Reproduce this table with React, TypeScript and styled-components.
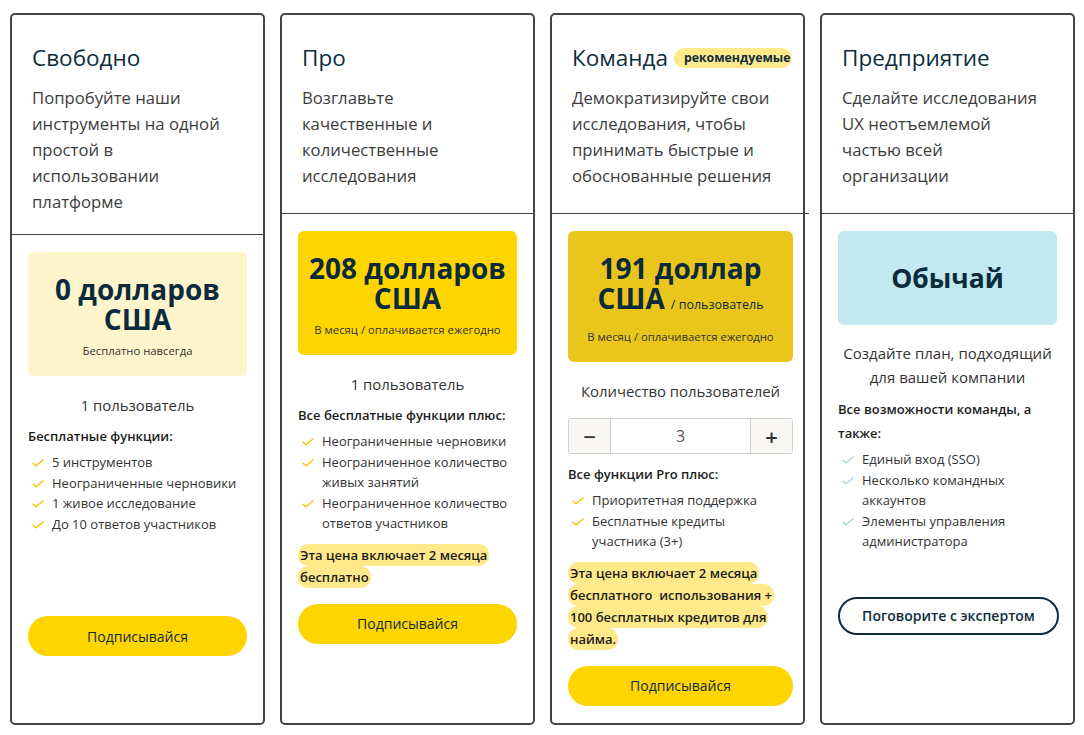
import React, { useState } from 'react';
import styled, { createGlobalStyle } from 'styled-components';

const GlobalStyle = createGlobalStyle`
  * { box-sizing: border-box; }
  body {
    margin: 0;
    background: #fff;
    font-family: 'Open Sans', 'Noto Sans', sans-serif;
  }
`;

const Page = styled.div`
  display: flex;
  gap: 15px;
  height: 100vh;
  padding: 13px 8px 10px 10px;
`;

const Card = styled.div`
  width: 255px;
  flex-shrink: 0;
  border: 2px solid #444;
  border-radius: 5px;
  display: flex;
  flex-direction: column;
`;

const Inner = styled.div<{ $wide?: boolean }>`
  margin-right: ${(p) => (p.$wide ? '-6px' : '0')};
  display: flex;
  flex-direction: column;
`;

const Header = styled.div`
  min-height: 199px;
  padding: 28px 28px 19px 20px;
  border-bottom: 1px solid #444;
`;

const TitleRow = styled.div`
  display: flex;
  align-items: center;
  gap: 6px;
  white-space: nowrap;
  margin-bottom: 13px;
`;

const Title = styled.h2`
  margin: 0;
  font-size: 22.5px;
  line-height: 29px;
  font-weight: 400;
  color: #0e2c3c;
`;

const Badge = styled.span`
  font-size: 12.3px;
  font-weight: 700;
  color: #0e2c3c;
  background: #ffe98a;
  border-radius: 10px;
  padding: 1px 1px 1px 10px;
  line-height: 18px;
`;

const Desc = styled.p`
  margin: 0;
  font-size: 16.7px;
  line-height: 26px;
  color: #3d3d3d;
`;

const Body = styled.div`
  padding: 17px 16px 16px;
  display: flex;
  flex-direction: column;
`;

const PriceBox = styled.div<{ $bg: string; $pad?: string }>`
  background: ${(p) => p.$bg};
  border-radius: 6px;
  padding: ${(p) => p.$pad || '22px 8px 17px'};
  text-align: center;
`;

const Amount = styled.div<{ $size?: number }>`
  font-size: ${(p) => p.$size || 28}px;
  line-height: 30px;
  font-weight: 700;
  color: #0b2b3c;
`;

const PerUser = styled.span`
  font-size: 12.5px;
  line-height: 1;
  font-weight: 500;
  margin-left: 6px;
`;

const PriceNote = styled.div<{ $gap?: number }>`
  margin-top: ${(p) => p.$gap ?? 9}px;
  font-size: 11.3px;
  line-height: 16px;
  color: #333;
`;

const Users = styled.div<{ $top?: number }>`
  margin-top: ${(p) => p.$top ?? 18}px;
  text-align: center;
  font-size: 14.9px;
  line-height: 22px;
  color: #333;
`;

const CenterText = styled.div`
  margin-top: 16px;
  text-align: center;
  font-size: 15px;
  line-height: 24px;
  color: #333;
`;

const Stepper = styled.div`
  margin-top: 16px;
  height: 36px;
  display: grid;
  grid-template-columns: 42px 1fr 42px;
  border: 1px solid #cfcfcf;
  border-radius: 3px;
  overflow: hidden;
`;

const StepButton = styled.button`
  border: none;
  background: #f7f6f3;
  font-size: 22px;
  font-weight: 600;
  color: #333;
  font-family: inherit;
  padding: 0;
  cursor: pointer;
  &:first-child { border-right: 1px solid #cfcfcf; }
  &:last-child { border-left: 1px solid #cfcfcf; }
`;

const StepValue = styled.div`
  display: flex;
  align-items: center;
  justify-content: center;
  font-size: 16px;
  color: #555;
  background: #fff;
`;

const FeatHead = styled.div`
  margin-top: 8px;
  font-size: 13px;
  line-height: 24px;
  font-weight: 600;
  color: #1c1c1c;
`;

const List = styled.ul`
  list-style: none;
  margin: 4px 0 0;
  padding: 0;
`;

const Item = styled.li`
  display: flex;
  align-items: flex-start;
  padding-right: 5px;
  font-size: 13px;
  line-height: 20.5px;
  color: #333;
`;

const Tick = styled.svg`
  flex-shrink: 0;
  margin: 7px 8px 0 4px;
`;

const Note = styled.p`
  margin: 10px 0 0;
  font-size: 13px;
  line-height: 22px;
  font-weight: 600;
  color: #1c1c1c;
`;

const Mark = styled.span`
  background: #ffe98a;
  padding: 2px 2px;
  border-radius: 10px;
  -webkit-box-decoration-break: clone;
  box-decoration-break: clone;
`;

const Button = styled.button<{ $top: number; $outline?: boolean }>`
  margin-top: ${(p) => p.$top}px;
  height: ${(p) => (p.$outline ? 38 : 40)}px;
  width: ${(p) => (p.$outline ? '221px' : '100%')};
  border-radius: 20px;
  border: ${(p) => (p.$outline ? '2px solid #0e2c3c' : 'none')};
  background: ${(p) => (p.$outline ? '#fff' : '#ffd500')};
  color: #0e2c3c;
  font-family: inherit;
  font-size: 14px;
  font-weight: ${(p) => (p.$outline ? 600 : 500)};
  cursor: pointer;
`;

const Check = ({ color }: { color: string }) => (
  <Tick width="12" height="8" viewBox="0 0 12 8">
    <path d="M1 4.2 L4 6.8 L11 1" fill="none" stroke={color} strokeWidth="1.4" strokeLinecap="round" strokeLinejoin="round" />
  </Tick>
);

const Features = ({ items, color = '#f6c400' }: { items: string[]; color?: string }) => (
  <List>
    {items.map((t) => (
      <Item key={t}>
        <Check color={color} />
        <span>{t}</span>
      </Item>
    ))}
  </List>
);

const App = () => {
  const [count, setCount] = useState(3);

  return (
    <>
      <GlobalStyle />
      <Page>
        <Card>
          <Inner>
            <Header>
              <TitleRow>
                <Title>Свободно</Title>
              </TitleRow>
              <Desc>Попробуйте наши инструменты на одной простой в использовании платформе</Desc>
            </Header>
            <Body>
              <PriceBox $bg="#fff5cc">
                <Amount>0 долларов США</Amount>
                <PriceNote>Бесплатно навсегда</PriceNote>
              </PriceBox>
              <Users>1 пользователь</Users>
              <FeatHead>Бесплатные функции:</FeatHead>
              <Features
                items={['5 инструментов', 'Неограниченные черновики', '1 живое исследование', 'До 10 ответов участников']}
              />
              <Button $top={82}>Подписывайся</Button>
            </Body>
          </Inner>
        </Card>

        <Card>
          <Inner>
            <Header>
              <TitleRow>
                <Title>Про</Title>
              </TitleRow>
              <Desc>Возглавьте качественные и количественные исследования</Desc>
            </Header>
            <Body>
              <PriceBox $bg="#ffd500">
                <Amount>208 долларов США</Amount>
                <PriceNote>В месяц / оплачивается ежегодно</PriceNote>
              </PriceBox>
              <Users>1 пользователь</Users>
              <FeatHead>Все бесплатные функции плюс:</FeatHead>
              <Features
                items={[
                  'Неограниченные черновики',
                  'Неограниченное количество живых занятий',
                  'Неограниченное количество ответов участников',
                ]}
              />
              <Note>
                <Mark>Эта цена включает 2 месяца бесплатно</Mark>
              </Note>
              <Button $top={16}>Подписывайся</Button>
            </Body>
          </Inner>
        </Card>

        <Card>
          <Inner $wide>
            <Header>
              <TitleRow>
                <Title>Команда</Title>
                <Badge>рекомендуемые</Badge>
              </TitleRow>
              <Desc>Демократизируйте свои исследования, чтобы принимать быстрые и обоснованные решения</Desc>
            </Header>
            <Body>
              <PriceBox $bg="#eac61c">
                <Amount>191 доллар</Amount>
                <Amount>
                  США<PerUser>/ пользователь</PerUser>
                </Amount>
                <PriceNote $gap={16}>В месяц / оплачивается ежегодно</PriceNote>
              </PriceBox>
              <Users>Количество пользователей</Users>
              <Stepper>
                <StepButton onClick={() => setCount((c) => Math.max(1, c - 1))}>−</StepButton>
                <StepValue>{count}</StepValue>
                <StepButton onClick={() => setCount((c) => c + 1)}>+</StepButton>
              </Stepper>
              <FeatHead>Все функции Pro плюс:</FeatHead>
              <Features items={['Приоритетная поддержка', 'Бесплатные кредиты участника (3+)']} />
              <Note>
                <Mark>Эта цена включает 2 месяца бесплатного&nbsp; использования + 100 бесплатных кредитов для найма.</Mark>
              </Note>
              <Button $top={16}>Подписывайся</Button>
            </Body>
          </Inner>
        </Card>

        <Card>
          <Inner>
            <Header>
              <TitleRow>
                <Title>Предприятие</Title>
              </TitleRow>
              <Desc>Сделайте исследования UX неотъемлемой частью всей организации</Desc>
            </Header>
            <Body>
              <PriceBox $bg="#c2e8f0" $pad="32px 8px 32px">
                <Amount $size={26.5}>Обычай</Amount>
              </PriceBox>
              <CenterText>Создайте план, подходящий для вашей компании</CenterText>
              <FeatHead>Все возможности команды, а также:</FeatHead>
              <Features
                color="#a9cfd9"
                items={['Единый вход (SSO)', 'Несколько командных аккаунтов', 'Элементы управления администратора']}
              />
              <Button $top={45} $outline>
                Поговорите с экспертом
              </Button>
            </Body>
          </Inner>
        </Card>
      </Page>
    </>
  );
};

export default App;
